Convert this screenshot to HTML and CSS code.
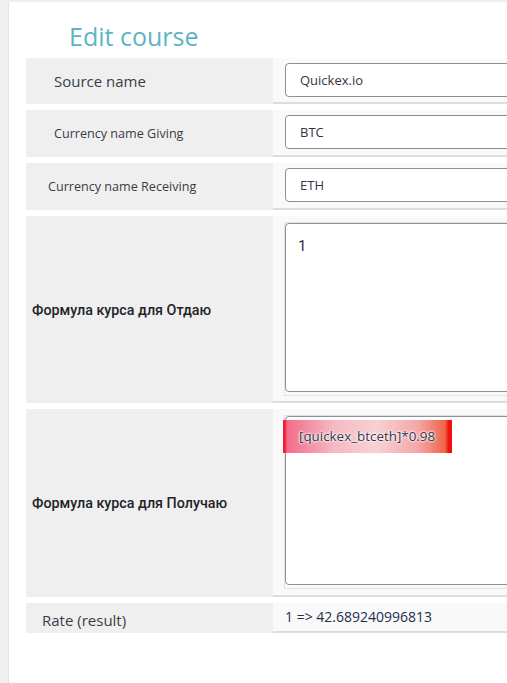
FILE: index.html
```html
<!DOCTYPE html>
<html>
<head>
<meta charset="utf-8">
<link rel="stylesheet" href="styles.css">
</head>
<body>
<div class="page">
  <h1 class="title">Edit course</h1>
  <div class="form">
    <div class="label l-source">Source name</div>
    <div class="value"><div class="input">Quickex.io</div></div>

    <div class="label l-small l-giving">Currency name Giving</div>
    <div class="value"><div class="input">BTC</div></div>

    <div class="label l-small l-receiving">Currency name Receiving</div>
    <div class="value"><div class="input">ETH</div></div>

    <div class="label l-ru">Формула курса для Отдаю</div>
    <div class="value"><div class="area-wrap"><div class="area"><span class="area-text">1</span></div></div></div>

    <div class="label l-ru">Формула курса для Получаю</div>
    <div class="value"><div class="area-wrap"><div class="area area-hl"><span class="hl">[quickex_btceth]*0.98</span></div></div></div>

    <div class="label l-rate">Rate (result)</div>
    <div class="value value-rate">1 =&gt; 42.689240996813</div>
  </div>
</div>
</body>
</html>
```
FILE: styles.css
```css
html, body {
  margin: 0;
  padding: 0;
  overflow: hidden;
}
body {
  background: #efefef;
  width: 507px;
  height: 683px;
  font-family: "Open Sans", "Liberation Sans", sans-serif;
}
.page {
  margin-left: 8px;
  margin-top: 2px;
  border-left: 1px solid #e2e2e2;
  background: #ffffff;
  height: 681px;
  padding-left: 17px;
  box-sizing: border-box;
  overflow: hidden;
}
.title {
  margin: 0;
  padding: 16px 0 0 43px;
  height: 40px;
  font-weight: 400;
  font-size: 25px;
  line-height: 36px;
  color: #5bb5c3;
}
.form {
  display: grid;
  grid-template-columns: 247px 300px;
  grid-template-rows: 46px 47px 47px 187px 188px 30px;
  row-gap: 6px;
}
.label {
  background: #efefef;
  display: flex;
  align-items: center;
  color: #3b3b47;
}
.l-source {
  padding-left: 28px;
  font-size: 15px;
}
.l-small {
  font-size: 12.6px;
}
.l-giving { padding-left: 28px; }
.l-receiving { padding-left: 22px; }
.l-ru {
  padding-left: 6px;
  font-family: Roboto, "Liberation Sans", sans-serif;
  font-weight: 500;
  font-size: 14.3px;
  color: #1f2329;
}
.l-rate {
  padding-left: 16px;
  font-size: 15px;
  padding-top: 4px;
  box-sizing: border-box;
}
.value {
  background: #f9f9f9;
  border-bottom: 2px solid #dddddd;
  padding: 5px 0 0 12px;
  box-sizing: border-box;
}
.input {
  height: 34px;
  box-sizing: border-box;
  border: 1px solid #8f8f94;
  border-radius: 4px;
  background: #fff;
  display: flex;
  align-items: center;
  padding-left: 14px;
  font-size: 13px;
  color: #34343f;
}
.area-wrap {
  margin-top: 1px;
  margin-left: -1px;
  border: 1px solid #e3e3e3;
  border-right: none;
  padding: 0 0 3px 0;
}
.area {
  height: 169px;
  box-sizing: border-box;
  border: 1px solid #8f8f94;
  border-radius: 4px;
  background: #fff;
  padding: 10px 0 0 12px;
}
.area-text {
  font-family: Roboto, "Liberation Sans", sans-serif;
  font-size: 15px;
  color: #2a3040;
}
.area-hl {
  padding: 3px 0 0 0;
}
.hl {
  display: inline-block;
  width: 169px;
  height: 33px;
  margin-left: -3px;
  box-sizing: border-box;
  padding: 8px 0 0 16px;
  font-size: 13.4px;
  line-height: 16px;
  color: #33334a;
  background: linear-gradient(90deg, #f01e2e 0, #f01e2e 2px, #f26c8a 4px, #f5b8c4 30%, #f7d1d4 55%, #f4a7a7 80%, #f06446 96%, #f01010 98%, #f01010 100%);
  text-shadow: 0 0 2px #fff, 0 0 2px #fff, 0 0 3px #fff;
}
.value-rate {
  padding: 4px 0 0 12px;
  font-size: 14px;
  color: #22304a;
}
```
